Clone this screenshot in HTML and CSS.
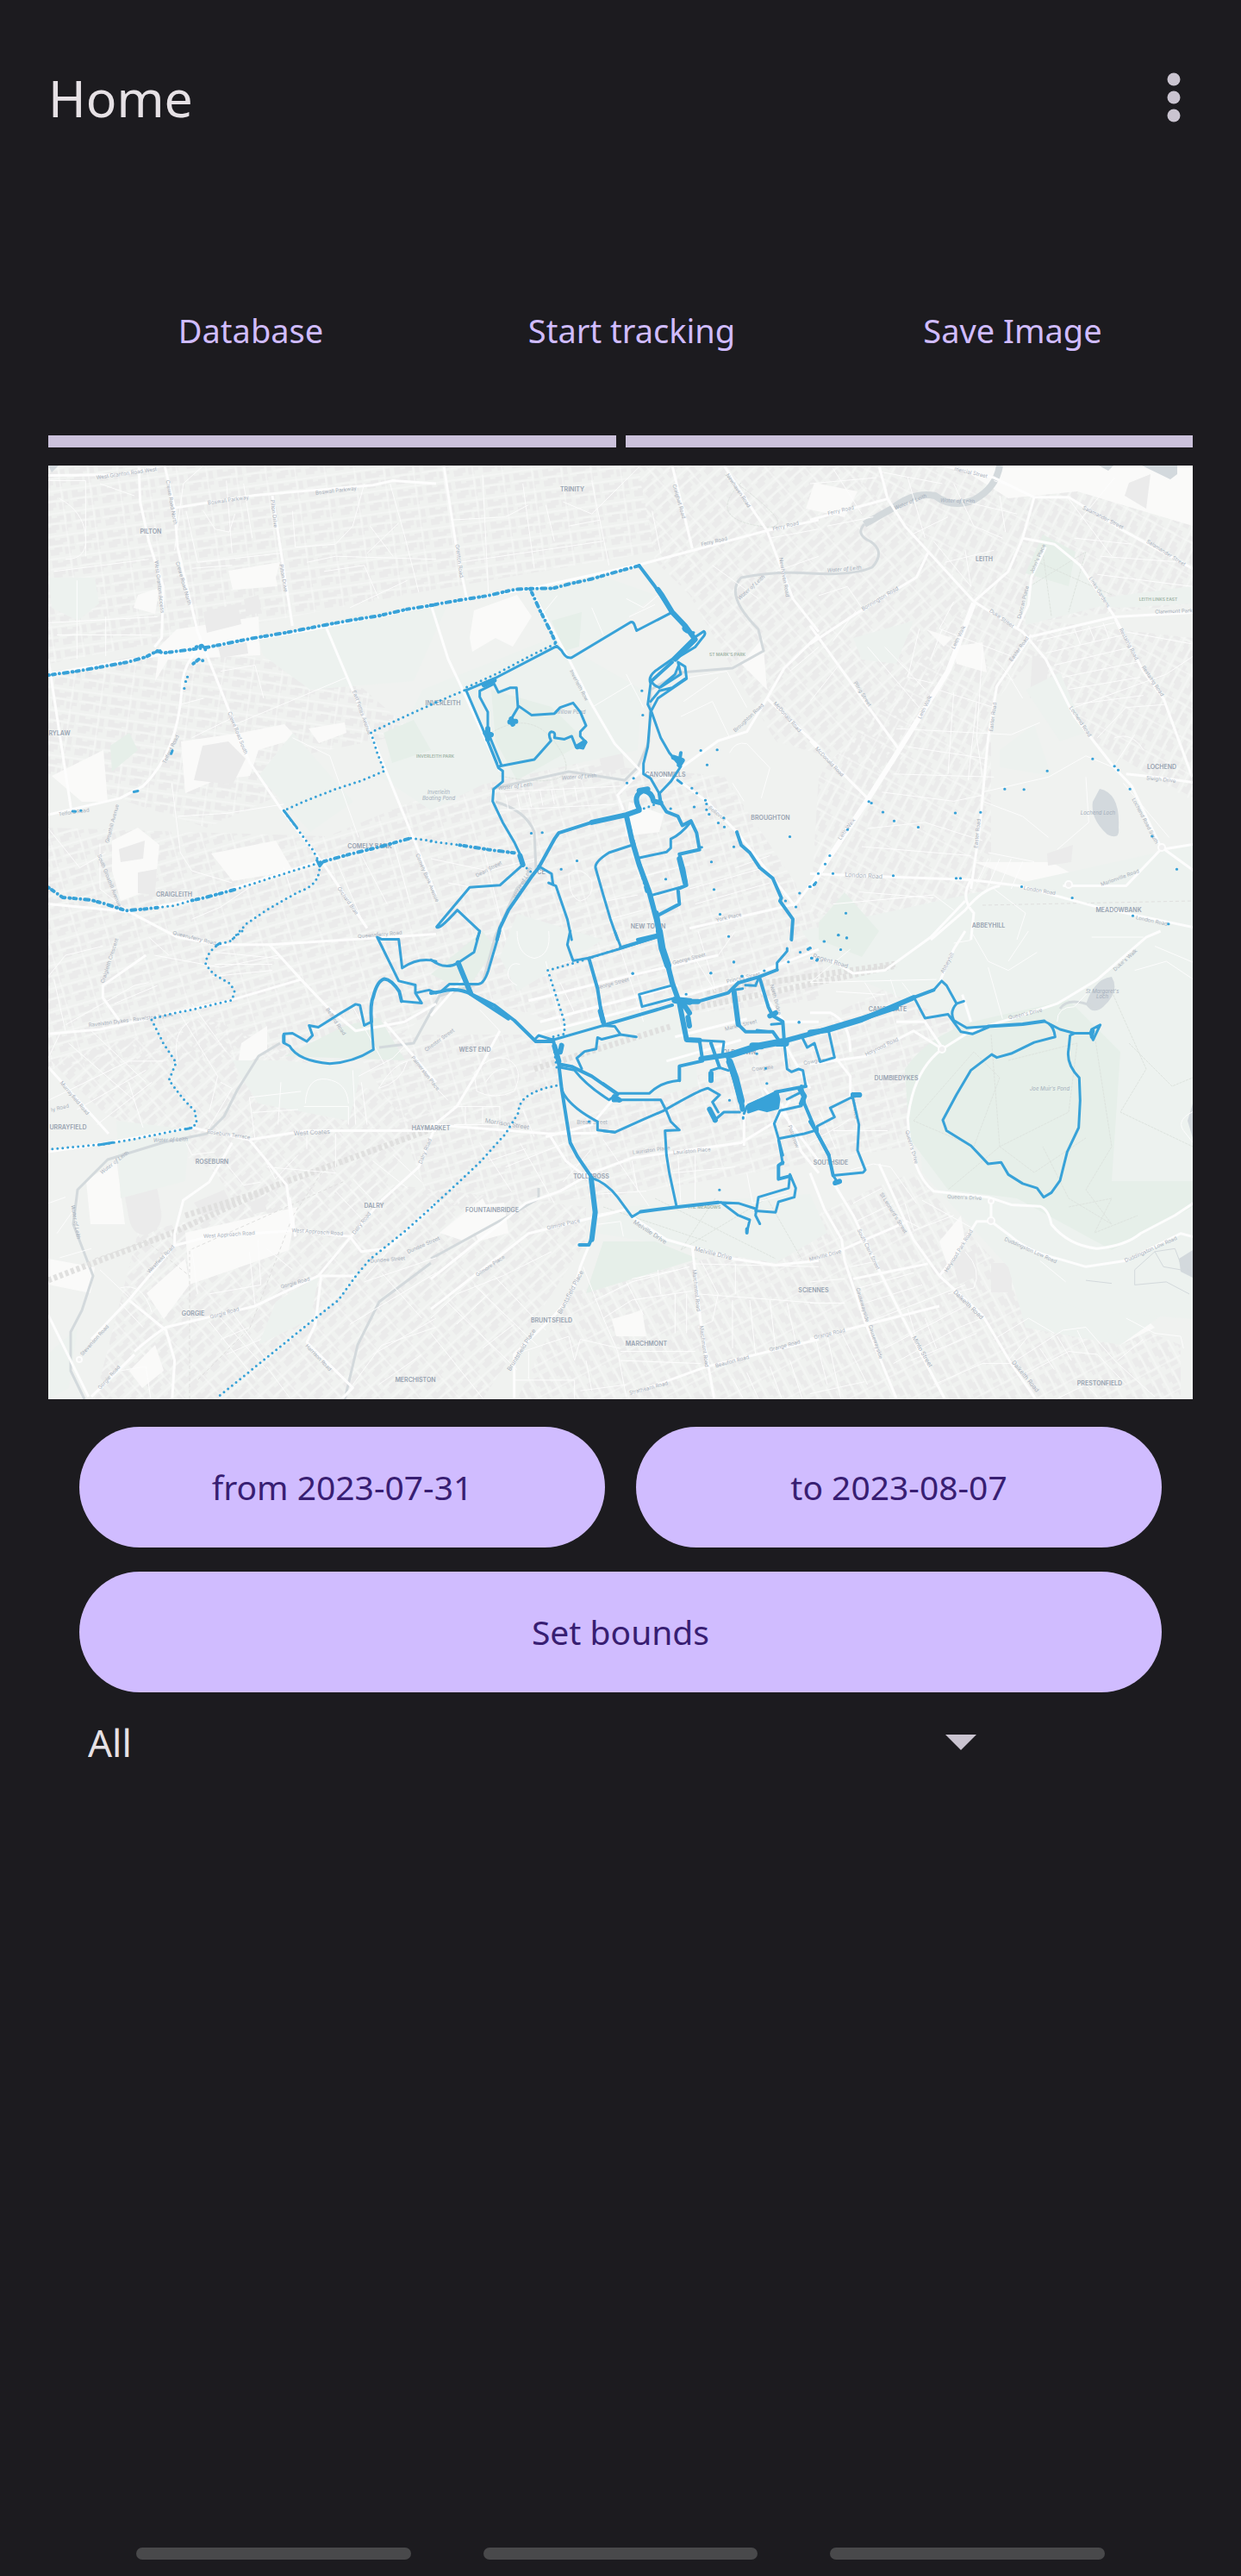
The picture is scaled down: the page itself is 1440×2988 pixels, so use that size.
FILE: index.html
```html
<!DOCTYPE html>
<html lang="en">
<head>
<meta charset="utf-8">
<meta name="viewport" content="width=device-width, initial-scale=1">
<title>Home</title>
<link rel="stylesheet" href="styles.css">
</head>
<body>
<header class="app-bar">
  <h1 class="title">Home</h1>
  <button class="more" type="button" aria-label="More options">
    <svg width="16" height="58" viewBox="0 0 16 58" aria-hidden="true"><circle cx="8" cy="8" r="7.5"/><circle cx="8" cy="29" r="7.5"/><circle cx="8" cy="50" r="7.5"/></svg>
  </button>
</header>
<main class="content">
  <div class="actions">
    <button class="text-button" type="button">Database</button>
    <button class="text-button" type="button">Start tracking</button>
    <button class="text-button" type="button">Save Image</button>
  </div>
  <div class="bars"><span class="bar"></span><span class="bar"></span></div>
  <svg class="map" viewBox="56 540 1328 1083" role="img" aria-label="Map of recorded tracks">
    <defs>
      <pattern id="blocks" width="34" height="26" patternUnits="userSpaceOnUse">
        <path class="block" d="M3 3h7v3h6v-2h8v5h-5v2H3zM27 3h5v9h-5zM3 16h5v-2h9v6h-4v3H3zM20 15h12v4h-5v4h-7z"/>
        <path class="lane" d="M0 1h34M0 13h25M25 0v26"/>
      </pattern>
      <pattern id="b1" href="#blocks" patternTransform="rotate(-8)"/>
      <pattern id="b2" href="#blocks" patternTransform="rotate(-16)"/>
      <pattern id="b3" href="#blocks" patternTransform="rotate(-42)"/>
      <pattern id="b4" href="#blocks" patternTransform="rotate(62)"/>
      <pattern id="b5" href="#blocks" patternTransform="rotate(8)"/>
      <pattern id="b6" href="#blocks" patternTransform="rotate(-62)"/>
    </defs>
    <rect class="land" x="56" y="540" width="1328" height="1083"/>

    <!-- built-up districts -->
    <path fill="url(#b1)" d="M56 540H740L760 640 470 690 56 770Z"/>
    <path fill="url(#b5)" d="M56 780 220 750 400 780 480 850 330 880 330 920 240 960 56 900Z"/>
    <path fill="url(#b2)" d="M56 960 380 970 600 880 840 900 960 1080 950 1160 660 1190 530 1150 440 1220 56 1240Z"/>
    <path fill="url(#b3)" d="M740 540H980L1130 690 1040 900 900 860 800 690 760 650Z"/>
    <path fill="url(#b6)" d="M1130 690 980 540 1384 540V700L1210 720 1384 740 1384 930 1270 860 1200 760 1150 820 1150 1070 940 1060 950 900Z"/>
    <path fill="url(#b3)" d="M56 1230 240 1180 420 1260 500 1290 430 1400 290 1420 250 1360 120 1290Z"/>
    <path fill="url(#b2)" d="M400 1200 640 1200 660 1300 860 1230 1060 1130 1120 1190 1050 1330 700 1390 500 1400 460 1290Z"/>
    <path fill="url(#b3)" d="M160 1430 420 1370 680 1400 680 1440 560 1623 110 1623Z"/>
    <path fill="url(#b4)" d="M660 1500 860 1450 1010 1380 1060 1360 1170 1480 1370 1560V1623H600Z"/>

    <!-- open ground -->
    <g class="plain">
      <path d="M265 662 325 652 320 670 322 680 270 684Z M160 690 185 682 180 712 155 705Z M205 730 300 715 302 760 195 765 180 790 185 750Z"/>
      <path d="M550 708 600 690 617 715 595 750 575 740 548 756 545 740Z M860 770 885 740 890 800Z M730 930 770 945 765 965 725 970Z"/>
      <path d="M1110 540H1384V610L1250 570 1170 578Z M1105 750 1140 745 1145 780 1110 770Z M945 560 995 570 980 600 935 590Z M1075 730 1105 740 1095 750Z"/>
      <path d="M60 900 120 870 125 930 95 930Z M130 975 160 960 185 980 180 1030 140 1045 130 1010Z M245 990 320 975 340 1010 270 1022Z"/>
      <path d="M210 860 280 850 330 840 345 856 300 870 290 900 250 905 215 920Z M358 845 400 838 402 850 370 862Z M1285 1030 1384 1010V1070H1290Z M1130 1000 1220 1000 1290 1040 1210 1030Z"/>
      <path d="M56 1460 110 1470 105 1500 56 1490Z M215 1430 345 1400 335 1450 220 1490Z M100 1370 135 1345 145 1420 105 1420Z M280 1210 310 1190 310 1220 275 1240Z"/>
      <path d="M540 1400 585 1395 590 1430 555 1440Z M710 1250 765 1235 740 1275Z M1090 1440 1115 1410 1120 1440 1100 1470Z M710 1530 745 1520 750 1550 715 1550Z M1295 1540 1320 1520 1340 1540 1300 1560Z"/>
      <path d="M170 1500 215 1460 220 1490 190 1530Z M150 1590 180 1560 190 1590 165 1610Z M510 1430 560 1390 570 1410 540 1440Z"/>
    </g>
    <g class="big-block">
      <path d="M236 710 276 700 280 724 240 734Z M283 695 300 690 303 710 286 714Z M253 750 286 745 288 758 256 763Z M235 865 265 860 285 880 270 910 225 905Z M160 1012 182 1008 180 1038 160 1036Z M138 985 168 975 166 996 140 1000Z M693 870 720 862 725 890 700 898Z M1198 760 1215 765 1215 800 1195 810Z M1310 560 1335 550 1330 590 1305 575Z M1215 990 1245 980 1243 1000 1216 1004Z M1305 1048 1340 1042 1340 1052 1305 1058Z M1105 1460 1130 1450 1135 1480 1112 1490Z M1140 1420h30v18h-28z M1150 1465h24v34h-24z M760 1225 785 1222 785 1240 762 1242Z M290 1395 305 1388 310 1405 293 1408Z M225 1395 260 1380 270 1400 235 1410Z"/>
      <path d="M143 1378Q138 1360 165 1358Q182 1360 186 1400Q192 1425 170 1432Q155 1434 150 1415Z"/>
    </g>

    <!-- green space -->
    <g class="green">
      <path d="M56 670 110 670 115 700 90 720 60 705Z M300 742 420 712 520 700 480 790 360 800 305 760Z M620 680 690 665 760 690 690 750 630 720Z M340 850 410 930 360 965 300 900Z M490 800 640 740 745 800 740 870 560 910 500 940 440 900Z M1190 690 1230 630 1290 700 1190 725Z M1230 700 1384 680V700L1300 705Z M990 740 1060 720 1040 770 1000 765Z"/>
      <path d="M1190 800 1230 780 1260 850 1230 860Z M1160 870 1200 840 1220 900 1160 890Z M270 1230 330 1230 420 1240 405 1300 300 1280 280 1250Z M135 1300 220 1310 215 1370 140 1390Z M700 1090 600 1150 580 1110 600 1060Z M660 1190 800 1160 810 1260 730 1280 660 1220Z"/>
      <path d="M930 1080 1384 980V1500L1300 1560 1190 1540 1170 1470 1070 1360 1060 1230 1120 1190 960 1120Z M720 1400 940 1385 960 1430 900 1465 690 1430Z"/>
      <path d="M56 1570 90 1540 80 1610 56 1623Z M320 1510 370 1480 360 1530 300 1560Z M1200 1500 1300 1440 1384 1450V1530L1260 1520Z"/>
    </g>
    <g class="park">
      <path d="M128 865 150 850 160 870 130 895Z M570 800 640 820 680 860 600 905 575 860Z M445 850 480 835 500 870 455 885Z M640 720 675 710 672 750 655 755Z M1210 620 1248 640 1240 680 1190 665Z M950 1070 980 1035 1020 1080 1000 1110 950 1090Z M500 1130 560 1080 575 1100 540 1150Z"/>
      <path d="M1050 1240Q1080 1195 1150 1180L1240 1160 1300 1220 1290 1370 1384 1370V1400L1290 1450 1180 1390 1100 1380 1055 1320Z M700 1440 760 1440 810 1460 680 1500Z M400 1190 440 1180 470 1230 330 1225Z"/>
    </g>
    <g class="water">
      <path d="M1276 915Q1300 920 1298 960Q1300 975 1285 968Q1265 950 1268 930ZM1260 1165Q1270 1135 1290 1133Q1300 1150 1280 1168Q1268 1178 1260 1165ZM1384 1450 1368 1460 1370 1475 1384 1482ZM1384 1280 1378 1300 1384 1320ZM1325 540H1366V550L1358 556ZM1275 540H1292L1286 546ZM56 540H68L60 548Z"/>
    </g>
    <g class="hill">
      <path d="M1060 1300 1130 1220 1160 1250 1130 1330 1060 1300M1150 1200 1160 1330 1100 1380M1170 1230 1250 1210 1240 1290 1160 1330 1200 1360 1260 1320M1270 1200 1290 1330 1260 1380 1290 1420 1240 1390 1210 1330M1290 1150 1330 1240 1300 1290 1384 1330M1310 1210 1360 1260 1384 1250M700 1400 820 1440M760 1390 900 1460M830 1390 790 1450 890 1390 930 1460M1200 650 1290 690M1195 680 1260 640 1240 710M1210 640 1220 715M570 850Q620 820 650 870T580 900M860 560Q820 600 880 610T840 550M1240 1400 1290 1390 1270 1430 1320 1410"/>
    </g>

    <!-- rivers and railways -->
    <g class="river">
      <path class="wide" d="M1160 540Q1156 566 1130 580Q1105 590 1085 575Q1060 570 1035 590L1003 608"/>
      <path d="M1003 608Q992 620 1010 628Q1028 640 1012 658Q990 668 940 665Q900 662 860 670Q840 690 880 730L886 755 850 775 790 780 755 800 753 860 740 890 725 905 660 895 570 915M575 930Q610 940 620 965L622 1010 600 1030 575 1085 560 1140 510 1155 480 1210 440 1215M325 1210 300 1225 275 1265 260 1295 240 1315 190 1325 125 1345 90 1380 85 1420 108 1480 95 1520 82 1545 82 1590 98 1623M500 1465 440 1510 415 1560 400 1623M500 1460 600 1405 625 1390V1378M1230 1170Q1240 1155 1270 1168"/>
    </g>
    <g class="rail"><path d="M56 1485 200 1430 320 1375 500 1310M215 1410 310 1380M800 1170 900 1150 1040 1120M620 1240 780 1190M820 1150 1040 1118"/></g>
    <g class="rail thin"><path d="M220 1623V1450L400 1370M110 1460 170 1440 220 1480M230 1600 290 1540 340 1410 380 1350M1140 1050 1384 1045"/></g>

    <!-- streets -->
    <g transform="translate(56 540) scale(.33333 .35077)">
      <path class="street major" d="M0 33 250 30 400 0M0 690 300 640 900 545 1350 460M315 0 320 120 350 250 400 400 395 570 370 600M405 0 440 140 450 270 520 550 600 740 700 980 810 1135 960 1320 1110 1530M440 140 720 98 1130 65 1200 50 1350 60M780 100 850 530M965 530 1120 880 1270 1230 1350 1420M0 1155 250 1100 330 1060Q450 950 465 740Q465 660 530 600M0 640 80 1140M280 1475 450 1560M0 1450 280 1475 540 1430 940 1310 1270 1230"/>
      <path class="street" d="M0 50H130V300M40 110Q120 150 130 230T60 310M180 60 300 100M20 350 350 310M0 520 380 500M100 380V640M200 500V630M30 560H360M440 280 470 60 540 0M480 150 520 320 810 290M540 150 580 210 630 220 650 160M620 50 640 290M680 60 710 240M500 340 640 330M850 150 860 270 1000 260 1060 200 1100 60M900 320 1000 300 1350 310M960 350 1100 330 1150 440M1190 60 1240 230 1290 420M1050 470 1250 380M1120 200 1200 300M1110 290 1220 190M600 680 720 660 750 770M640 860 1040 700M460 790 540 770M500 900 650 830M850 900 980 960 1080 1230M450 1160 620 1150 820 1120M180 1250 180 1400 280 1475M430 1050 460 1280 500 1340 640 1380M820 1330 850 1420M1000 1300 1100 1520M0 1200 110 1330 200 1280M500 1500 600 1460 770 1350M1080 1270 1180 1450M1200 1240 1260 1450"/>
    </g>
    <g transform="translate(500 540) scale(.33333 .35077)">
      <path class="street major" d="M45 0 90 280 125 440M0 462 345 407 725 328 1170 215 1350 180M840 0 910 275M1020 0 1130 160 1170 215 1260 440 1350 550M345 407 480 640 560 790 640 920 730 1010M730 1010 650 1090 670 1140M870 1000 1000 910 1100 880 1170 770 1230 670 1350 560M1170 770 1350 930M730 1010 860 1040 960 1110 1065 1212 1270 1460M900 1530 1270 1450 1350 1350M60 640 100 720 240 1010M0 460 60 640"/>
      <path class="street" d="M70 180 260 170 340 130M180 30 200 420M320 60 360 340M400 130 430 250M100 320 600 250M560 50 620 330M730 0 560 160M770 150 800 290M680 440 740 470 790 430M690 500 780 460M560 470 600 560M380 500 440 430M240 1080 660 1060M240 1140 640 1120M260 1090 270 1140M300 1085 310 1135M340 1080 350 1130M380 1075 390 1125M420 1070 430 1120M460 1065 470 1115M500 1060 510 1110M680 690 740 800M560 800 700 720M870 830 980 780 1040 900M900 700 1030 680 1100 800M880 780 1000 700M0 1300 200 1340 360 1300M60 1380 170 1400M180 1250 260 1568M480 1350Q480 1430 520 1440Q570 1430 560 1370Q520 1320 480 1350M610 1440 720 1420M620 1500 740 1470M730 1360 900 1320M1050 1050 1090 1110M1180 1290 1060 1330M1040 950Q1060 910 1100 920L1180 1000 1150 1100M1250 680 1350 600M900 1400 1160 1330M920 1450 1180 1380M1200 350 1350 300M1180 240 1350 210M980 330 1140 440M460 120 560 160M480 200 590 180"/>
    </g>
    <g transform="translate(940 540) scale(.33333 .35077)">
      <path class="street major" d="M0 180 270 110 330 200 570 450 740 550 820 640 920 830 1060 1000 1120 1060 1220 1260 1350 1350M240 0 270 110M460 0 640 40 780 105 900 105 1100 220 1350 350M780 105 740 240 690 350 570 450M0 590 160 490 370 370 410 290M0 530 310 940M740 240 850 260 940 330 1060 500 1160 680 1230 770 1330 1030M770 565 1060 500 1350 485M820 270 770 370 760 460 720 540M770 560 650 730 620 900 590 1200 560 1400M0 910 200 1100M0 1350 560 1370 730 1390 1000 1460 1350 1530M560 1370Q520 1430 570 1480L560 1568M660 1390Q600 1400 540 1470L420 1568M880 1390 1100 1390 1220 1270 1350 1250M1100 1020 1200 1030 1350 1050"/>
      <path class="street avenue" d="M570 455 480 680 310 940 190 1120 50 1320 0 1400"/>
      <path class="street" d="M640 50 730 80M340 40 400 240M500 60 570 200 670 240M350 230 480 170M540 120 720 160M660 100 680 220M430 250 560 400 540 280M470 320 640 280M900 110 1050 300M920 240 1120 260M940 180 1060 40M1000 360 1330 400M1010 300 1300 320M80 10 180 160M0 60 230 40M60 200 220 170M30 430 130 400 180 470M500 450 450 540 700 630M460 540 420 640M380 540 340 700 430 720M600 610 580 900 600 1030M640 640 690 690 740 770M300 870 700 890 800 850M340 930 620 970M290 1020 640 1030M500 750 480 1020M580 780 550 1040M440 740 640 800M790 580 1060 520M820 620 1090 560M850 660 1120 600M880 700 1140 650M900 740 1150 700M920 790 1160 760M920 540 940 590M970 530 990 580M1020 520 1040 570M1060 510 1090 570M920 800 1240 690 1350 620M1000 900 1100 800 1240 790M1100 550 1330 590M250 1080 500 1110 600 1090M200 1200 400 1180 600 1240M180 1260 560 1290M600 1080 830 1030 960 960 1060 1000M600 1110 740 1160 830 1230M620 1300 580 1380M660 1300 620 1390M700 1300 660 1390M740 1310 700 1400M620 1280 780 1310M960 1030 970 1180 860 1270M1090 1050 1250 1230M1130 890 1060 990M1060 900Q1120 880 1160 940M80 1450 430 1420 500 1470M170 1410 430 1430M240 20 460 60M200 600 380 800M260 600 400 740M100 660 0 780M160 480 80 580M640 1400 750 1480 720 1568"/>
    </g>
    <g transform="translate(56 1080) scale(.33333 .35077)">
      <path class="street major" d="M450 20 590 45 770 45 1350 10M770 45 880 160 970 250 1070 330 1240 300 1350 240M1170 300 1350 500M0 340 180 325 630 230 880 160M340 80 190 180 190 220 250 300M0 450 210 670M0 730 210 700 500 650 700 690 900 660 1350 660M640 700 560 830 470 890 440 1000 440 1040 280 1220 150 1350M0 1270 140 1540M300 1390Q360 1340 410 1310L720 1240 940 1140 1150 900 1290 780 1350 640M150 1540 300 1400M440 1040 560 1010 860 990 1050 1010 1090 1060 1180 1050 1350 900M840 880 860 1010M940 1140 1070 1140M950 1140 930 1300 900 1360 1060 1510 1000 1568M700 690 830 840 850 990M280 1220 410 1320 440 1420 430 1568"/>
      <path class="street" d="M0 150 60 80 190 50M60 310 300 180 350 170M230 240 380 180M20 160 60 330M370 80 600 120 800 80M350 20 420 80M580 70 800 90M580 110H780M570 150 780 130M40 340 0 420M70 370 300 560M150 330 340 500M0 560 280 430 400 430M100 590 340 460M170 640 360 500M280 500 330 650M450 260 590 480 560 600M500 240 620 400M450 430Q430 340 490 300M600 500 640 520 560 650M480 700 500 740 580 730M700 550 880 530M710 600 870 590M700 550 720 690M810 500 800 640M895 570Q900 480 970 490Q1040 500 1045 570M890 580H1045V640M1060 460 1070 640M1080 480 1200 420 1240 380M1150 520Q1200 440 1250 430Q1230 500 1150 520M1110 640 1090 500M740 730 790 820 870 740M900 680V720M1000 670V780M760 780 1000 800M620 770 680 840 740 830M30 1000 90 920M40 1080 150 1050M180 1120 280 1210M250 1230 330 1310M500 1050 520 1200M560 1200 740 1170 730 1020M720 1240 700 1060M640 1260 760 1420M560 1290 720 1480M600 1280 760 1450M600 1350 700 1310M620 1400 740 1350M760 1050 850 1120M1000 860 1100 960M1060 820 1160 920M1130 760 1250 850M1200 740 1300 830M1100 1150 1180 1060M1100 1160 1350 1080M1160 1130 1300 1280M1050 1300 1350 1130M1130 1400 1350 1280M1060 1500 1160 1370 1350 1310M250 1180Q330 1160 360 1260M0 900 60 880M210 1460 340 1440 360 1568M1170 440 1060 250M1150 1500 1300 1400M760 1440 860 1568"/>
    </g>
    <g transform="translate(500 1080) scale(.33333 .35077)">
      <path class="street major" d="M0 650 90 580 160 470 240 330M0 640 410 670 580 668M370 340 860 220 1050 170 1350 60M380 300 860 180M340 230 680 150 1000 80M0 280 120 150M560 800 700 750 1080 700 1200 630 1250 560M560 800 450 860 330 900 0 1150M0 1250 340 1000 680 920M550 1040 520 1110Q500 1200 430 1270L290 1400V1568M410 670 470 760 560 830M700 945 820 1020 910 1045 1060 1085 1200 1105 1350 1090M910 1045 940 1300 990 1568M960 1440 1350 1350M700 1530 960 1440M820 430 1080 360M400 680 560 640 640 550M850 350 1100 290M1090 710V590M1160 520 1350 760M1220 570 1290 730 1350 800M1230 370 1320 520M1150 200 1230 300H1350"/>
      <path class="street" d="M150 470Q200 410 260 420Q330 450 290 530Q220 560 160 530ZM190 500Q230 440 270 460M80 580H240V640H80M120 580V640M180 580V640M450 110 520 90M460 340 400 100M500 270 450 170M660 60 740 300M900 60 990 200M930 0 990 190M1000 80 1060 0M0 500 60 560M320 590 360 680M170 700 280 860M200 760 330 720M310 700 430 900M260 780 470 700M460 830 560 720M600 690 760 910M580 870 750 860M700 760 720 860M860 740 870 900M920 740V890M840 800 1060 780M1100 800 1120 900 1240 870M560 940 680 920M580 970 660 960 670 1010M0 1280 90 1200 250 1140 420 1060M60 1230 300 1450M150 1170 370 1370M220 1140 400 1320M0 1330 200 1568M90 1300 200 1200M180 1380 290 1300M290 1400 480 1340 500 1420 520 1350 660 1380M530 1110 600 1280 650 1390 680 1540M570 1220 700 1160 900 1110M600 1280 700 1220 910 1190M680 1160 740 1270M790 1120 800 1200M940 1090 1000 1200 980 1290 930 1310M910 1100 1350 1110M930 1200 1350 1230M850 1200V1330M890 1200V1330M1050 1220V1380M1110 1220 1130 1400M1180 1220 1200 1380M1240 1230 1270 1360M660 1390H920M660 1420 940 1430M290 1485H500V1568M340 1390V1480M520 1520 680 1500M540 1420 560 1520M1050 1480 1100 1568M1100 1460 1150 1568M1180 1440 1230 1568M1250 1420 1300 1568M300 180Q260 160 270 130T310 110M240 330 170 260M300 0Q300 80 360 90Q420 80 410 0M1060 1100V1200M700 1150 860 1120"/>
    </g>
    <g transform="translate(940 1080) scale(.33333 .35077)">
      <path class="street major" d="M0 85 80 100 150 140 260 130 420 20 540 -100M540 0 500 60 450 170M530 210 560 300M0 440 190 415 360 330 460 390M90 420 140 480V550M460 390Q360 460 340 620Q350 800 430 860L620 880 700 905 800 910Q830 920 840 970Q900 1040 1000 1050Q1100 1040 1150 1000L1270 940 1350 890M460 390 560 330 700 290 860 240 1000 160 1170 20 1220 0M630 890V960L700 1010Q760 1060 870 1085L960 1110 1100 1090 1290 1000 1350 1015M630 960 580 960 500 1080 450 1140M240 770 360 1020 450 1140 600 1270 700 1430 800 1568M0 800 50 920 110 1020 120 1090 190 1290 310 1568M80 830 150 940 250 1140 360 1350 480 1568M0 1090 120 1050 340 960M150 1150 410 1100M0 1350 200 1300 450 1240M0 270H70Q140 300 140 400M300 300H400L460 385"/>
      <path class="street" d="M0 170 440 160M190 170 230 230M280 160 300 220M320 170 360 220M90 200 260 210M0 700 110 640 140 620M30 590 90 720M80 660H270M140 790 220 770 280 780 370 900M150 900 250 850M160 960 290 900M330 900 360 990 500 940M390 890 560 980M300 940 380 980M140 1110 240 1090M0 1160 120 1150M0 1230H120M170 1180 360 1130M190 1230 390 1170M210 1290 430 1210 540 1170M260 1380 500 1260 560 1230M290 1430 520 1310 600 1280M350 1420 480 1370 580 1330M430 1500 600 1430 700 1430M20 1350 60 1500M60 1340 110 1560M110 1330 200 1500M0 1530 190 1490M340 1250 370 1350M400 1280 440 1380M460 1150 550 1230M700 1430 880 1320 960 1310 1060 1420 1200 1540M740 1470 900 1390 1000 1400 1100 1500M640 1350 760 1280 850 1330M690 1420 760 1340M800 1380 850 1450M860 1340 910 1420M930 1320 970 1400M830 1560 960 1500 1000 1540M1070 1420 1160 1350M1100 1280 1200 1330 1290 1340 1300 1380M690 100 760 0M560 0 620 100 690 130 790 70M500 40 560 30M800 1090 890 1160M620 120 670 290M860 300Q860 250 920 250L970 200M1130 130 1240 100 1350 170M980 20 1160 20M1200 50 1350 110M1350 590Q1270 620 1300 660L1350 720M0 170 140 60M540 1060Q600 1120 570 1180L480 1200M200 1050 240 1110"/>
      <path class="reeds" d="M1130 1120 1200 1060 1270 1050 1290 1100 1330 1130M1130 1120V1170L1240 1160 1320 1200M1200 1060 1230 1110 1290 1120M960 1155 1050 1165"/>
    </g>
    <g class="roundabout"><circle cx="1093" cy="1217" r="4"/><circle cx="1150" cy="1416" r="4"/><circle cx="1150" cy="1393" r="3"/><circle cx="1348" cy="983" r="4"/><circle cx="1240" cy="1026" r="4"/><circle cx="92" cy="1577" r="3"/></g>

    <!-- district names -->
    <g class="place">
      <text x="175" y="619">PILTON</text><text x="69" y="853">RYLAW</text><text x="429" y="984">COMELY BANK</text><text x="202" y="1040">CRAIGLEITH</text><text x="514" y="818">INVERLEITH</text><text x="664" y="570">TRINITY</text><text x="894" y="951">BROUGHTON</text><text x="752" y="1077">NEW TOWN</text><text x="772" y="901">CANONMILLS</text><text x="1142" y="651">LEITH</text><text x="1348" y="892">LOCHEND</text><text x="1298" y="1058">MEADOWBANK</text><text x="1147" y="1076">ABBEYHILL</text><text x="628" y="1014">CE</text><text x="246" y="1350">ROSEBURN</text><text x="79" y="1310">URRAYFIELD</text><text x="500" y="1311">HAYMARKET</text><text x="434" y="1401">DALRY</text><text x="224" y="1526">GORGIE</text><text x="482" y="1603">MERCHISTON</text><text x="551" y="1220">WEST END</text><text x="686" y="1367">TOLLCROSS</text><text x="571" y="1406">FOUNTAINBRIDGE</text><text x="640" y="1534">BRUNTSFIELD</text><text x="750" y="1561">MARCHMONT</text><text x="944" y="1499">SCIENNES</text><text x="858" y="1223">OLD TOWN</text><text x="1030" y="1173">CANONGATE</text><text x="1040" y="1253">DUMBIEDYKES</text><text x="964" y="1351">SOUTHSIDE</text><text x="1276" y="1607">PRESTONFIELD</text>
    </g>
    <g class="place small">
      <text x="844" y="761">ST MARK'S PARK</text><text x="1344" y="697">LEITH LINKS EAST</text><text x="505" y="879">INVERLEITH PARK</text><text x="817" y="1402">THE MEADOWS</text>
    </g>
    <g class="pond">
      <text x="509" y="921">Inverleith</text><text x="509" y="928">Boating Pond</text><text x="662" y="828">Willow Pond</text><text x="1218" y="1265">Joe Muir's Pond</text><text x="1279" y="1152">St Margaret's</text><text x="1279" y="1158">Loch</text><text x="1274" y="945">Lochend Loch</text>
      <text transform="translate(873 683) rotate(-42)">Water of Leith</text><text transform="translate(1057 584) rotate(-22)">Water of Leith</text><text transform="translate(1111 583) rotate(2)">Water of Leith</text><text transform="translate(980 662) rotate(-5)">Water of Leith</text><text transform="translate(672 903) rotate(-4)">Water of Leith</text><text transform="translate(598 914) rotate(-7)">Water of Leith</text><text transform="translate(608 1025) rotate(-62)">Water of Leith</text><text transform="translate(198 1324) rotate(-2)">Water of Leith</text><text transform="translate(134 1350) rotate(-38)">Water of Leith</text><text transform="translate(86 1418) rotate(80)">Water of Leith</text>
    </g>
    <!-- street names -->
    <g class="road-name">
      <text transform="translate(147 551) rotate(-8)">West Granton Road West</text><text transform="translate(197 583) rotate(80)">Crewe Road North</text><text transform="translate(211 677) rotate(74)">Crewe Road North</text><text transform="translate(183 681) rotate(83)">West Granton Access</text><text transform="translate(265 582) rotate(-8)">Boswall Parkway</text><text transform="translate(390 571) rotate(-7)">Boswall Parkway</text><text transform="translate(316 596) rotate(83)">Pilton Drive</text><text transform="translate(327 671) rotate(80)">Pilton Drive</text><text transform="translate(274 851) rotate(68)">Crewe Road South</text><text transform="translate(418 827) rotate(70)">East Fettes Avenue</text><text transform="translate(200 870) rotate(-64)">Telford Road</text><text transform="translate(86 944) rotate(-8)">Telford Road</text><text transform="translate(132 956) rotate(-75)">Groathill Avenue</text><text transform="translate(125 1022) rotate(68)">South Groathill Avenue</text><text transform="translate(402 1046) rotate(55)">Orchard Brae</text><text transform="translate(494 1019) rotate(67)">Comely Bank Avenue</text><text transform="translate(441 1086) rotate(-5)">Queensferry Road</text><text transform="translate(225 1090) rotate(14)">Queensferry Road</text>
      <text transform="translate(531 651) rotate(82)">Granton Road</text><text transform="translate(786 582) rotate(74)">Craighall Road</text><text transform="translate(855 570) rotate(56)">Newhaven Road</text><text transform="translate(908 670) rotate(80)">Newhaven Road</text><text transform="translate(829 630) rotate(-13)">Ferry Road</text><text transform="translate(912 612) rotate(-13)">Ferry Road</text><text transform="translate(976 594) rotate(-13)">Ferry Road</text><text transform="translate(670 796) rotate(62)">Inverleith Row</text><text transform="translate(870 834) rotate(-43)">Broughton Road</text><text transform="translate(912 833) rotate(48)">McDonald Road</text><text transform="translate(831 945) rotate(38)">Bellevue</text><text transform="translate(846 1066) rotate(-13)">York Place</text><text transform="translate(568 1010) rotate(-28)">Dean Street</text>
      <text transform="translate(1126 550) rotate(13)">mercial Street</text><text transform="translate(1279 602) rotate(27)">Salamander Street</text><text transform="translate(1352 643) rotate(32)">Salamander Street</text><text transform="translate(1022 696) rotate(-31)">Bonnington Road</text><text transform="translate(1161 719) rotate(35)">Duke Street</text><text transform="translate(1189 699) rotate(-76)">Duncan Place</text><text transform="translate(1206 649) rotate(-66)">John's Place</text><text transform="translate(1274 688) rotate(58)">Links Gardens</text><text transform="translate(1362 711) rotate(-2)">Claremont Park</text><text transform="translate(1184 754) rotate(-54)">Easter Road</text><text transform="translate(1154 832) rotate(-82)">Easter Road</text><text transform="translate(1136 967) rotate(-84)">Easter Road</text><text transform="translate(1114 740) rotate(-64)">Leith Walk</text><text transform="translate(1075 821) rotate(-64)">Leith Walk</text><text transform="translate(984 963) rotate(-54)">Leith Walk</text><text transform="translate(999 806) rotate(58)">Pilrig Street</text><text transform="translate(961 885) rotate(46)">McDonald Road</text><text transform="translate(1252 838) rotate(56)">Lochend Road</text><text transform="translate(1308 748) rotate(62)">Restalrig Road</text><text transform="translate(1336 791) rotate(56)">Restalrig Road</text><text transform="translate(1327 953) rotate(62)">Lochend Road South</text><text transform="translate(1347 906) rotate(6)">Sleigh Drive</text><text transform="translate(1300 1020) rotate(-20)">Marionville Road</text><text class="lg" transform="translate(1002 1018) rotate(3)">London Road</text><text transform="translate(1206 1035) rotate(10)">London Road</text><text transform="translate(1336 1070) rotate(12)">London Road</text>
      <text transform="translate(129 1115) rotate(-72)">Craigleith Crescent</text><text transform="translate(152 1185) rotate(-7)">Ravelston Dykes · Ravelston Dykes</text><text transform="translate(85 1275) rotate(50)">Murrayfield Road</text><text transform="translate(70 1287) rotate(-14)">ly Road</text><text transform="translate(388 1186) rotate(56)">Belford Road</text><text transform="translate(265 1318) rotate(8)">Roseburn Terrace</text><text class="lg" transform="translate(362 1316) rotate(-3)">West Coates</text><text transform="translate(266 1434) rotate(-4)">West Approach Road</text><text transform="translate(368 1431) rotate(4)">West Approach Road</text><text transform="translate(188 1462) rotate(-46)">Westfield Road</text><text transform="translate(343 1490) rotate(-16)">Gorgie Road</text><text transform="translate(261 1525) rotate(-16)">Gorgie Road</text><text transform="translate(128 1599) rotate(-48)">Gorgie Road</text><text transform="translate(111 1556) rotate(-48)">Stevenson Road</text><text transform="translate(421 1420) rotate(-52)">Dalry Road</text><text transform="translate(495 1336) rotate(-68)">Dalry Road</text><text transform="translate(450 1463) rotate(-5)">Dundee Street</text><text transform="translate(492 1446) rotate(-24)">Dundee Street</text><text transform="translate(368 1576) rotate(46)">Harrison Road</text><text transform="translate(492 1246) rotate(52)">Palmerston Place</text>
      <text transform="translate(711 1143) rotate(-15)">George Street</text><text transform="translate(800 1114) rotate(-15)">George Street</text><text transform="translate(863 1136) rotate(-13)">Princes Street</text><text transform="translate(898 1160) rotate(75)">North Bridge</text><text transform="translate(860 1191) rotate(-14)">Market Street</text><text transform="translate(885 1241) rotate(-7)">Cowgate</text><text transform="translate(945 1233) rotate(-10)">Cowgate</text><text class="lg" transform="translate(588 1306) rotate(9)">Morrison Street</text><text transform="translate(687 1304)">Bread Street</text><text transform="translate(756 1336) rotate(-7)">Lauriston Place</text><text transform="translate(803 1337) rotate(-5)">Lauriston Place</text><text transform="translate(654 1422) rotate(-13)">Gilmore Place</text><text transform="translate(570 1470) rotate(-34)">Gilmore Place</text><text class="lg" transform="translate(664 1500) rotate(-62)">Bruntsfield Place</text><text class="lg" transform="translate(607 1567) rotate(-58)">Bruntsfield Place</text><text class="lg" transform="translate(753 1431) rotate(33)">Melville Drive</text><text class="lg" transform="translate(827 1456) rotate(14)">Melville Drive</text><text transform="translate(806 1497) rotate(84)">Marchmont Road</text><text transform="translate(815 1562) rotate(82)">Marchmont Road</text><text transform="translate(850 1581) rotate(-15)">Beaufort Road</text><text transform="translate(753 1612) rotate(-15)">Strathearn Road</text><text transform="translate(911 1563) rotate(-15)">Grange Road</text><text transform="translate(919 1319) rotate(70)">Potterrow</text><text transform="translate(511 1208) rotate(-36)">Chester Street</text>
      <text class="lg" transform="translate(963 1117) rotate(17)">Regent Road</text><text transform="translate(1101 1118) rotate(-62)">Abbeyhill</text><text transform="translate(1024 1216) rotate(-26)">Holyrood Road</text><text transform="translate(1190 1178) rotate(-13)">Queen's Drive</text><text transform="translate(1307 1115) rotate(-42)">Duke's Walk</text><text transform="translate(1056 1331) rotate(74)">Queen's Drive</text><text transform="translate(1119 1391) rotate(3)">Queen's Drive</text><text transform="translate(990 1284) rotate(82)">Pleasance</text><text transform="translate(1035 1408) rotate(58)">St Leonard's Street</text><text transform="translate(1006 1450) rotate(64)">South Clerk Street</text><text transform="translate(1114 1452) rotate(-58)">Holyrood Park Road</text><text transform="translate(1195 1452) rotate(24)">Duddingston Low Road</text><text transform="translate(1336 1451) rotate(-24)">Duddingston Low Road</text><text class="lg" transform="translate(1122 1515) rotate(44)">Dalkeith Road</text><text class="lg" transform="translate(1188 1598) rotate(50)">Dalkeith Road</text><text transform="translate(999 1514) rotate(74)">Causewayside</text><text transform="translate(1014 1557) rotate(72)">Causewayside</text><text class="lg" transform="translate(1068 1569) rotate(60)">Minto Street</text><text transform="translate(963 1549) rotate(-14)">Grange Road</text><text transform="translate(958 1458) rotate(-15)">Melville Drive</text>
    </g>

    <!-- recorded tracks -->
    <g class="track" transform="translate(56 540) scale(.33333 .35077)">
      <path class="dense" d="M0 693 100 680 190 665 275 650 340 633 380 613 400 620 515 606 560 600 700 573 830 552 960 528 1050 512 1150 497 1250 475 1350 460M515 600 535 595 550 612M505 655 525 640 545 648M0 1395 50 1428 150 1437 200 1450 270 1472 330 1467 380 1462M500 1438 540 1430 650 1402M945 1313 1050 1285 1150 1262 1262 1232"/>
      <path class="dots" d="M1350 783 1230 835 1123 882 1145 950 1170 1010 1090 1042 1000 1070 900 1107 820 1141 870 1205 920 1270 945 1315M380 1462 440 1455 500 1438M650 1402 780 1362 880 1332 945 1313M1262 1232 1350 1243M945 1320C945 1370 920 1395 870 1410L760 1470 690 1515 640 1568"/>
      <path d="M820 1141 865 1197M935 1305 945 1325 957 1310M484 699h1M478 714h1M473 737h1M432 943 428 953M298 1079 312 1076M85 1143 95 1144M113 1141h1M365 620 390 612"/>
    </g>
    <g class="track" transform="translate(500 540) scale(.33333 .35077)">
      <path class="dense" d="M0 462 100 445 200 430 290 410 345 407 425 406 480 392 560 375 640 353 725 331M345 407 380 480 420 555 438 595M690 1190 720 1300 755 1420M100 1255 200 1270 300 1282"/>
      <path class="dots" d="M0 790 120 742M125 733 230 688 340 632 435 588M0 1243 100 1255M320 1320 350 1345M725 1140 795 1115"/>
      <path d="M125 742 230 700 438 597 455 612Q470 640 490 635L695 518Q705 515 710 530L716 546 840 485M122 742 180 870 235 1000M170 745 220 722 235 750 275 735 298 735 303 800 275 845M170 745V765L198 815V880L215 920 245 990M190 890 230 985M305 795 350 825 430 820 450 800 495 785 520 815 540 860 520 880V895L540 915 530 935 505 930 490 895 465 905 430 900Q435 880 420 880Q405 885 418 910L360 972 235 995M235 1000 250 1010V1045L218 1070 215 1110 250 1180 290 1245 310 1285 320 1320 240 1388 135 1395 20 1525Q25 1540 92 1470L170 1540 160 1568M375 1325 420 1350 425 1385 410 1380 435 1390 475 1500 490 1568"/>
      <path d="M885 530Q870 540 890 550L915 552M915 570 950 548Q960 555 945 570L920 600 850 640M915 570 840 640 780 680Q755 700 765 720L755 790 768 815 800 900 830 950 870 995 835 1045 795 1085 765 1035 740 1020V985L755 930 765 815 790 770 890 705 885 665 860 650 870 690 800 733Q780 735 765 710M865 655 850 690 795 735M885 705 840 735 795 745 765 780M905 1178Q870 1220 835 1235V1265L820 1278 722 1298M765 1422 885 1390M700 1255 620 1280Q570 1310 573 1330L600 1420 625 1500 650 1568"/>
      <path class="w4" d="M725 331 780 400 840 485M795 1085 800 1115 820 1145 860 1160 875 1190 905 1175 925 1215 935 1270 865 1285 880 1335 890 1388 860 1400 865 1450 785 1490M1065 1212 1080 1255 1110 1280 1145 1330 1190 1365 1220 1430 1215 1440 1260 1500 1255 1568"/>
      <path class="w6" d="M680 1155 700 1240 725 1320 760 1410 785 1500 800 1568M790 410 805 430 840 485 885 530 920 575 850 640M725 1135Q700 1090 740 1075Q770 1080 775 1110L800 1115M725 1075 755 1070M725 1140 680 1155 560 1180M845 965 875 975 865 990M865 1300 885 1380M190 885 210 890M198 870V905M510 930 535 915M275 848 295 846M280 838 285 855M185 725 220 710M785 1480 800 1568M310 1290 320 1320"/>
      <path class="w4" d="M560 1180 445 1215 430 1235 375 1330 350 1360 270 1470 240 1530 230 1568M870 950 865 980M720 1568 800 1550M765 715 840 650"/>
      <path d="M734 745h1M737 825h1M682 1050h1M705 1034h1M939 942h1M996 940h1M961 990h1M858 1040 873 1051M908 1067h1M925 1083h1M955 1107h1M959 1119h1M916 1129h1M959 1138h1M968 1153h1M1019 1165h1M1000 1182h1M1021 1195h1M349 1216h1M387 1214h1M508 1307h1M453 1335h1M942 1262h1M1054 1261h1M976 1311h1M817 1368h1M985 1402h1M1006 1484h1M1036 1557h1M1249 1227h1M1318 1393h1M1336 1385h1M1283 1414h1M1270 1460h1M834 1135h1M1234 1440h1"/>
    </g>
    <g class="track" transform="translate(940 540) scale(.33333 .35077)">
      <path d="M204 1111h1M213 1116h1M253 1146h1M292 1175h1M376 1196h1M505 1149h1M593 1147h1M677 1070h1M744 1071h1M825 1010h1M983 970h1M1059 994h1M1072 1007h1M1113 1070h1M1190 1226h1M1276 1335h1M130 1204h1M68 1290h1M52 1318h1M28 1349h1M79 1349h1M289 1356h1M508 1365h1M523 1365h1M736 1393h1M912 1430h1M1123 1489h1M1247 1516h1M13 1387 20 1379M0 1393h1M124 1480h1M98 1553h1M127 1562h1"/>
    </g>
    <g class="track" transform="translate(56 1080) scale(.33333 .35077)">
      <path class="dots" d="M675 0 630 35 595 43Q550 70 548 110L575 142 635 175 648 200 640 228 500 260 430 273 358 290 400 370 445 435 420 493 470 555 510 595 517 635 500 650 400 668 300 688 200 704 100 713 0 722M1335 913 1245 990 1120 1085 1075 1135 1010 1220 930 1280 800 1380 670 1480 585 1545"/>
      <path d="M585 48 598 40M175 707 225 699M478 655 498 651"/>
      <path d="M1350 100Q1290 85 1232 122L1220 27 1160 27 1145 20 1220 165 1278 178V205L1325 195 1350 205M1278 205 1300 238 1230 232M1125 300 1100 312 1085 245 1070 242 1020 270 940 318 908 312 920 345 900 365 850 338 820 340V370L840 380Q870 430 980 438Q1060 435 1132 392L1125 300"/>
      <path class="w4" d="M1230 232 1222 200Q1195 160 1170 158Q1145 165 1132 215Q1120 240 1125 300M820 345V368"/>
    </g>
    <g class="track" transform="translate(500 1080) scale(.33333 .35077)">
      <path class="dots" d="M455 508Q370 520 330 550Q305 570 305 600L260 670 170 765 80 845 0 915M407 130 500 105 650 60M407 130 465 300V340L415 352M430 400 440 465"/>
      <path d="M170 0 150 70 95 105Q50 130 0 95M240 0 200 130Q185 175 165 175H65L35 200M485 0 475 45 495 98 545 90 660 58 800 15M640 0 660 50M365 355 375 345 425 360 600 312 640 315 660 342 715 350M660 342 595 358 580 352 575 390 535 398 508 420 525 455M445 450 500 460Q540 510 620 558L650 540M650 558H800L820 595 835 630 865 658 815 660 820 740 830 800 855 910M455 525Q480 580 580 630V658L640 665M555 815Q610 830 650 880L700 945 730 928M1000 897 1070 900 1130 918M1010 897 1070 940 1110 955 1100 995M1210 690 1225 770M1250 805 1245 850 1140 880 1130 940 1145 968M1130 925 1200 930 1210 895 1265 880 1270 850 1250 805"/>
      <path class="w4" d="M0 205 35 200Q90 185 140 208L220 245 290 295 365 365 425 365M95 105 140 210 270 290M550 90 580 190 590 250 602 305M600 312 840 245M425 358 445 440 455 520 485 700 510 745 560 815M445 440 490 448 560 480 650 540M730 928 860 912 1000 897M1225 765 1210 775V820L1250 810M1100 985V998M660 55 800 15M635 560H660"/>
      <path class="w6" d="M430 380 445 430M455 378 450 400M558 820 572 930 560 1020M590 265 600 300M638 548 655 558M95 105 138 205"/>
      <path class="w4" d="M560 1015 550 1038H517"/>
      <path d="M550 630h1M1004 856h1M702 140h1M974 139h1M1054 102h1M1083 149h1M1281 301h1M1244 102h1M1285 70h1M1312 60 1320 56M1325 89h1M1343 96h1M1160 131h1"/>
    </g>
    <g class="track" transform="translate(700 1100) scale(.33333)">
      <path class="w8" d="M195 -60 205 0 225 60M440 372 540 340 620 325M440 395 460 450 480 530M250 180 300 185M520 340H550M605 330H635"/>
      <path class="w6" d="M225 60 240 120 265 190 290 318 335 320M280 195 300 225M295 240 300 270M340 385 440 370M620 325 750 290 900 245 1020 205M480 530 485 560M375 435V460M370 560 390 598M685 490 700 515 690 540M455 150 470 265M580 235 600 225M270 185 330 185M870 510H890"/>
      <path class="w4" d="M330 185 435 155 470 120 540 100 605 75M265 460V410L345 392M335 320 345 385M375 330 405 415M430 370 485 560M545 105 575 205 590 235 625 255 630 325M470 265 495 290 590 290 615 325M600 500 705 480M690 480 700 540 740 635 785 720"/>
      <path d="M605 75V50L640 10V0M235 130 125 160 135 203 240 175M335 320 420 325 415 365M405 415 435 425M375 425 405 415M265 460Q200 465 160 505H50L0 470M705 480 695 425 680 420 655 430 640 420 630 330M475 570 420 570 385 600M400 570 380 535 405 510 365 487Q340 490 210 565L140 595 40 640 0 635M690 548 615 565 595 610 610 662 625 720M610 662 700 645 745 632M695 315 710 345 735 330 755 395 805 380 785 290M455 145 485 140M495 128 530 130 540 105M535 285 580 290M585 265 620 262M490 575 500 550 540 530M640 525 690 500"/>
      <path class="fill" d="M505 545 560 520 605 498 612 525 608 556 570 566 540 558 505 570Z"/>
      <path d="M102 88h1M454 48h1M374 86h1M482 97h1M681 258h1M534 367h1M565 418h1M569 470h1M439 529h1M487 588v4M288 160h1M745 38h1M725 34h1M713 4h1"/>
    </g>
    <g class="track" transform="translate(940 1080) scale(.33333 .35077)">
      <path d="M430 195 458 165 475 180 510 240 535 232M510 240Q485 265 500 295L545 320 620 315M365 225 400 288 480 275 525 333 565 340 620 318M815 298 870 325 920 338 975 338 985 360 1010 310 980 325 975 338M830 305Q850 320 853 350L780 368 700 405 650 418 632 408 560 460 510 540 462 625 475 660 560 710 620 770 665 765 690 805 740 835 790 850 813 880 840 865 870 825 895 730 935 650 940 560 937 485Q890 440 900 390L905 345 920 338M148 548 170 640 165 725 192 790 185 798 80 808M148 548 70 585 85 615 25 645V670M80 808 95 830"/>
      <path class="w4" d="M360 220 430 195M620 315 740 308 815 298M80 808 65 740 25 670 0 630M85 835 105 828M985 330 980 350"/>
      <path class="w6" d="M0 335 60 328 180 293 360 220M150 542H172M88 832 102 828"/>
      <path d="M48 34h2M106 61h1M98 13h1M127 22h1M5 90h1M23 97h1M0 56h1"/>
    </g>
  </svg>

  <form class="controls">
    <div class="dates">
      <button class="pill" type="button">from 2023-07-31</button>
      <button class="pill" type="button">to 2023-08-07</button>
    </div>
    <button class="pill" type="button">Set bounds</button>
    <div class="picker">
      <select class="select" aria-label="Filter tracks"><option>All</option></select>
      <svg class="arrow" width="36" height="18" viewBox="0 0 36 18" aria-hidden="true"><path d="M0 0H36L18 18Z"/></svg>
    </div>
  </form>
</main>
<footer class="system-nav"><span class="handle"></span><span class="handle"></span><span class="handle"></span></footer>
</body>
</html>
```
FILE: styles.css
```css
* { box-sizing: border-box; }

body {
  margin: 0;
  min-height: 100vh;
  display: flex;
  flex-direction: column;
  background: #1c1b1f;
  color: #e6e1e5;
  font-family: "Noto Sans", sans-serif;
}

button, select { font: inherit; color: inherit; border: 0; margin: 0; }

.app-bar {
  display: flex;
  align-items: center;
  justify-content: space-between;
  height: 226px;
  padding: 0 70px 0 56px;
}
.title { margin: 0; font-size: 59px; line-height: 80px; font-weight: 400; }
.more { display: flex; padding: 0; background: none; }
.more svg { fill: #cac4d0; }

.content { padding: 0 56px; }

.actions {
  display: grid;
  grid-template-columns: repeat(3, 1fr);
  height: 279px;
  padding: 116px 0 82px;
  margin: 0 -12px 0 14px;
}
.text-button {
  padding: 0;
  background: none;
  color: #d0bcff;
  font-size: 38px;
  line-height: 52px;
}

.bars { display: flex; gap: 11px; margin-bottom: 21px; }
.bar { flex: 1; height: 14px; background: #ccc2dc; }

.controls {
  display: flex;
  flex-direction: column;
  gap: 28px;
  padding: 32px 36px 0;
}
.dates { display: grid; grid-template-columns: 1fr 1fr; gap: 36px; }
.pill {
  height: 140px;
  padding: 0;
  border-radius: 70px;
  background: #d0bcff;
  color: #381e72;
  font-size: 39px;
  line-height: 52px;
}
.picker { display: grid; grid-template-columns: 84% 16%; align-items: center; }
.select {
  appearance: none;
  grid-area: 1 / 1;
  height: 60px;
  padding: 0 10px;
  background: none;
  font-size: 44px;
  line-height: 60px;
}
.arrow { grid-area: 1 / 1; justify-self: end; margin-right: 14px; fill: #cac4d0; pointer-events: none; }

.system-nav {
  display: flex;
  justify-content: center;
  gap: 84px;
  margin-top: auto;
  padding: 0 158px 19px;
}
.handle { flex: 1; height: 14px; border-radius: 7px; background: #49494b; }

/* map */
.map { display: block; width: 100%; height: auto; font-family: Inter, sans-serif; }
.land { fill: #f0f2f0; }
.plain { fill: #fafaf9; }
.block, .big-block { fill: #ebebeb; }
.green { fill: #edf2ef; }
.park { fill: #e6efe9; }
.water { fill: #d3d9dd; }
.lane { fill: none; stroke: #f8f9f8; }
.hill path { fill: none; stroke: #dde3de; stroke-dasharray: 3 1; }
.river path { fill: none; stroke: #d3d9dc; stroke-width: 3; stroke-linejoin: round; }
.river .wide { stroke-width: 8; }
.reeds { fill: none; stroke: #d3d9dc; vector-effect: non-scaling-stroke; }
.rail path { fill: none; stroke: #e0e0df; stroke-width: 7; stroke-dasharray: 4 3; }
.rail.thin path { stroke-width: 1; }
.street {
  fill: none;
  stroke: #fdfdfd;
  stroke-width: 1;
  stroke-linejoin: round;
  vector-effect: non-scaling-stroke;
}
.street.major { stroke-width: 3; }
.street.avenue { stroke-width: 6; }
.roundabout { fill: #f0f0f0; stroke: #fdfdfd; stroke-width: 2; }
.map text { text-anchor: middle; }
.place { fill: #98a3b1; font-size: 7px; font-weight: 600; }
.place.small { fill: #a1b5a7; font-size: 5px; }
.pond { fill: #a5afbc; font-size: 6px; font-style: italic; }
.road-name { fill: #a9b1bc; font-size: 6px; }
.road-name .lg { font-size: 7px; }
.track path {
  fill: none;
  stroke: #38a2d8;
  stroke-width: 3;
  stroke-linecap: round;
  stroke-linejoin: round;
  vector-effect: non-scaling-stroke;
}
.track .dots { stroke-dasharray: 0 6; }
.track .dense { stroke-width: 4; stroke-dasharray: 1 4 3 5 0 5 5 5; }
.track .w4 { stroke-width: 4; }
.track .w6 { stroke-width: 6; }
.track .w8 { stroke-width: 8; }
.track .fill { fill: #38a2d8; }
```
